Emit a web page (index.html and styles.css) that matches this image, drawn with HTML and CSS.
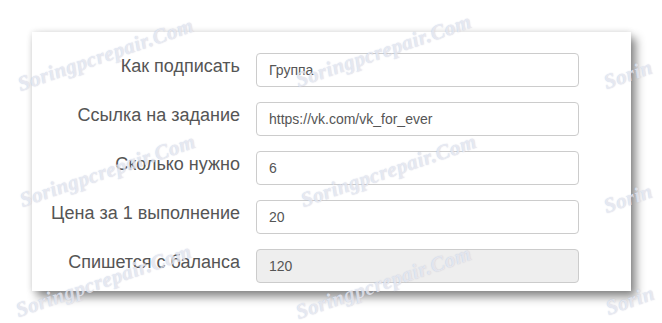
FILE: index.html
```html
<!DOCTYPE html>
<html lang="ru">
<head>
    <meta charset="UTF-8">
    <title>Новое задание</title>
    <link rel="stylesheet" href="styles.css">
</head>
<body>

<div class="card">
    <div class="row">
        <label class="label" for="title">Как подписать</label>
        <input class="field" type="text" id="title" value="Группа">
    </div>
    <div class="row">
        <label class="label" for="link">Ссылка на задание</label>
        <input class="field" type="text" id="link" value="https://vk.com/vk_for_ever">
    </div>
    <div class="row">
        <label class="label" for="count">Сколько нужно</label>
        <input class="field" type="text" id="count" value="6">
    </div>
    <div class="row">
        <label class="label" for="price">Цена за 1 выполнение</label>
        <input class="field" type="text" id="price" value="20">
    </div>
    <div class="row">
        <label class="label" for="total">Спишется с баланса</label>
        <input class="field" type="text" id="total" value="120" disabled>
    </div>
</div>

<!-- watermark layer over the form -->
<div class="marks">
    <span class="mark m1">Soringpcrepair.Com</span>
    <span class="mark m2">Soringpcrepair.Com</span>
    <span class="mark m3">Sorin</span>
    <span class="mark m4">Soringpcrepair.Com</span>
    <span class="mark m5">Soringpcrepair.Com</span>
    <span class="mark m6">Sorin</span>
    <span class="mark m7">Soringpcrepair.Com</span>
    <span class="mark m8">Soringpcrepair.Com</span>
    <span class="mark m9">Sorin</span>
</div>

</body>
</html>
```

FILE: styles.css
```css
body {
    font-family: "Liberation Sans", Arial, sans-serif;
    background-color: #fff;
    margin: 0;
    padding: 32px 0 0 32px;
    width: 662px;
    height: 323px;
    box-sizing: border-box;
    overflow: hidden;
    position: relative;
}
.card {
    width: 599px;
    height: 259px;
    box-sizing: border-box;
    background-color: #fff;
    padding: 21px 52px 0 0;
    display: flex;
    flex-direction: column;
    gap: 15px;
    box-shadow: 5px 6px 9px rgba(0, 0, 0, 0.45), 0 0 6px rgba(0, 0, 0, 0.12);
}
.row {
    display: flex;
    align-items: flex-start;
    gap: 16px;
}
.label {
    width: 208px;
    flex: none;
    text-align: right;
    font-size: 18px;
    line-height: 20px;
    padding-top: 3px;
    color: #555;
}
.field {
    width: 323px;
    height: 34px;
    box-sizing: border-box;
    border: 1px solid #ccc;
    border-radius: 4px;
    padding: 0 12px;
    font-family: "Liberation Sans", Arial, sans-serif;
    font-size: 14px;
    color: #555;
    background-color: #fff;
    margin: 0;
}
.field:disabled {
    background-color: #eee;
    color: #555;
}
.marks {
    position: absolute;
    left: 0;
    top: 0;
    width: 662px;
    height: 323px;
    pointer-events: none;
}
.mark {
    position: absolute;
    font-family: "Liberation Serif", serif;
    font-style: italic;
    font-weight: bold;
    font-size: 21px;
    letter-spacing: 0.5px;
    line-height: 1;
    color: rgba(246, 247, 251, 0.7);
    text-shadow: 0 0 1px rgba(130, 140, 180, 0.5);
    transform-origin: left bottom;
    transform: rotate(-19deg);
    white-space: nowrap;
}
.m1 { left: 22px; top: 74px; }
.m2 { left: 300px; top: 70px; }
.m3 { left: 608px; top: 72px; }
.m4 { left: 24px; top: 190px; }
.m5 { left: 305px; top: 190px; }
.m6 { left: 608px; top: 196px; }
.m7 { left: 20px; top: 300px; }
.m8 { left: 300px; top: 302px; }
.m9 { left: 610px; top: 298px; }
```
